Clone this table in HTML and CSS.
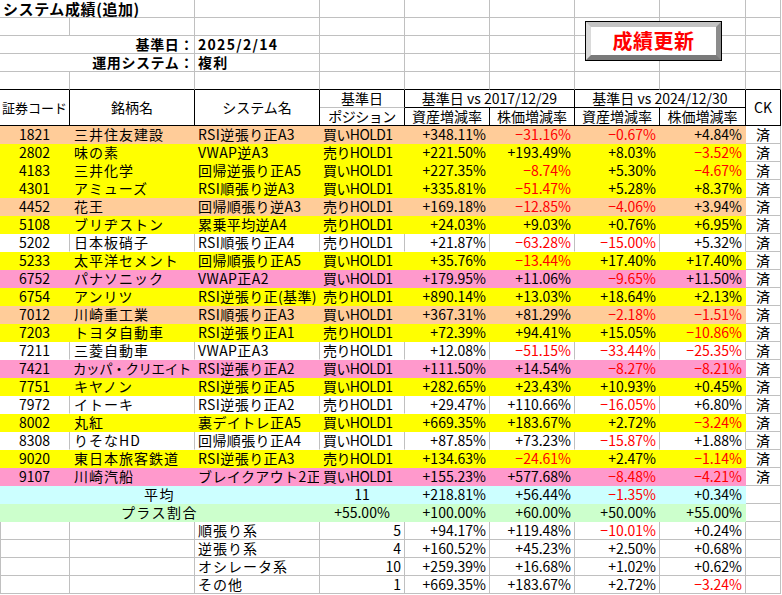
FILE: index.html
```html
<!DOCTYPE html>
<html lang="ja">
<head>
<meta charset="utf-8">
<title>システム成績(追加)</title>
<link rel="stylesheet" href="styles.css">
</head>
<body>
<div class="sheet">
<table class="grid">
<colgroup>
<col class="ca"><col class="cb"><col class="cc"><col class="cd"><col class="ce"><col class="cf"><col class="cg"><col class="ch"><col class="ci">
</colgroup>
<tbody>
<tr><td colspan="2" class="title">システム成績(追加)</td><td></td><td></td><td></td><td></td><td></td><td></td><td></td></tr>
<tr><td></td><td></td><td></td><td></td><td></td><td></td><td></td><td></td><td></td></tr>
<tr><td colspan="2" class="lbl">基準日：</td><td class="val">2025/2/14</td><td></td><td></td><td></td><td></td><td></td><td></td></tr>
<tr><td colspan="2" class="lbl">運用システム：</td><td class="val">複利</td><td></td><td></td><td></td><td></td><td></td><td></td></tr>
<tr class="pre"><td></td><td></td><td></td><td></td><td></td><td></td><td></td><td></td><td></td></tr>
<tr class="hd">
<td rowspan="2" class="h code-h">証券コード</td>
<td rowspan="2" class="h c">銘柄名</td>
<td rowspan="2" class="h c">システム名</td>
<td class="h c sub">基準日</td>
<td colspan="2" class="h c">基準日 vs 2017/12/29</td>
<td colspan="2" class="h c">基準日 vs 2024/12/30</td>
<td rowspan="2" class="h c">CK</td>
</tr>
<tr class="hd">
<td class="h c pos">ポジション</td>
<td class="h c">資産増減率</td>
<td class="h c">株価増減率</td>
<td class="h c">資産増減率</td>
<td class="h c">株価増減率</td>
</tr>
<tr class="o d"><td class="c">1821</td><td>三井住友建設</td><td>RSI逆張り正A3</td><td>買いHOLD1</td><td class="r">+348.11%</td><td class="r n">−31.16%</td><td class="r n">−0.67%</td><td class="r">+4.84%</td><td class="ck">済</td></tr>
<tr class="y d"><td class="c">2802</td><td>味の素</td><td>VWAP逆A3</td><td>売りHOLD1</td><td class="r">+221.50%</td><td class="r">+193.49%</td><td class="r">+8.03%</td><td class="r n">−3.52%</td><td class="ck">済</td></tr>
<tr class="y d"><td class="c">4183</td><td>三井化学</td><td>回帰逆張り正A5</td><td>買いHOLD1</td><td class="r">+227.35%</td><td class="r n">−8.74%</td><td class="r">+5.30%</td><td class="r n">−4.67%</td><td class="ck">済</td></tr>
<tr class="y d"><td class="c">4301</td><td>アミューズ</td><td>RSI順張り逆A3</td><td>買いHOLD1</td><td class="r">+335.81%</td><td class="r n">−51.47%</td><td class="r">+5.28%</td><td class="r">+8.37%</td><td class="ck">済</td></tr>
<tr class="o d"><td class="c">4452</td><td>花王</td><td>回帰順張り逆A3</td><td>売りHOLD1</td><td class="r">+169.18%</td><td class="r n">−12.85%</td><td class="r n">−4.06%</td><td class="r">+3.94%</td><td class="ck">済</td></tr>
<tr class="y d"><td class="c">5108</td><td>ブリヂストン</td><td>累乗平均逆A4</td><td>売りHOLD1</td><td class="r">+24.03%</td><td class="r">+9.03%</td><td class="r">+0.76%</td><td class="r">+6.95%</td><td class="ck">済</td></tr>
<tr class="w d"><td class="c">5202</td><td>日本板硝子</td><td>RSI順張り正A4</td><td>売りHOLD1</td><td class="r">+21.87%</td><td class="r n">−63.28%</td><td class="r n">−15.00%</td><td class="r">+5.32%</td><td class="ck">済</td></tr>
<tr class="y d"><td class="c">5233</td><td>太平洋セメント</td><td>回帰順張り正A5</td><td>買いHOLD1</td><td class="r">+35.76%</td><td class="r n">−13.44%</td><td class="r">+17.40%</td><td class="r">+17.40%</td><td class="ck">済</td></tr>
<tr class="p d"><td class="c">6752</td><td>パナソニック</td><td>VWAP正A2</td><td>買いHOLD1</td><td class="r">+179.95%</td><td class="r">+11.06%</td><td class="r n">−9.65%</td><td class="r">+11.50%</td><td class="ck">済</td></tr>
<tr class="y d"><td class="c">6754</td><td>アンリツ</td><td>RSI逆張り正(基準)</td><td>売りHOLD1</td><td class="r">+890.14%</td><td class="r">+13.03%</td><td class="r">+18.64%</td><td class="r">+2.13%</td><td class="ck">済</td></tr>
<tr class="o d"><td class="c">7012</td><td>川崎重工業</td><td>RSI順張り正A3</td><td>買いHOLD1</td><td class="r">+367.31%</td><td class="r">+81.29%</td><td class="r n">−2.18%</td><td class="r n">−1.51%</td><td class="ck">済</td></tr>
<tr class="y d"><td class="c">7203</td><td>トヨタ自動車</td><td>RSI逆張り正A1</td><td>売りHOLD1</td><td class="r">+72.39%</td><td class="r">+94.41%</td><td class="r">+15.05%</td><td class="r n">−10.86%</td><td class="ck">済</td></tr>
<tr class="w d"><td class="c">7211</td><td>三菱自動車</td><td>VWAP正A3</td><td>売りHOLD1</td><td class="r">+12.08%</td><td class="r n">−51.15%</td><td class="r n">−33.44%</td><td class="r n">−25.35%</td><td class="ck">済</td></tr>
<tr class="p d"><td class="c">7421</td><td class="tight">カッパ・クリエイト</td><td>RSI逆張り正A2</td><td>買いHOLD1</td><td class="r">+111.50%</td><td class="r">+14.54%</td><td class="r n">−8.27%</td><td class="r n">−8.21%</td><td class="ck">済</td></tr>
<tr class="y d"><td class="c">7751</td><td>キヤノン</td><td>RSI逆張り正A5</td><td>買いHOLD1</td><td class="r">+282.65%</td><td class="r">+23.43%</td><td class="r">+10.93%</td><td class="r">+0.45%</td><td class="ck">済</td></tr>
<tr class="w d"><td class="c">7972</td><td>イトーキ</td><td>RSI逆張り正A2</td><td>売りHOLD1</td><td class="r">+29.47%</td><td class="r">+110.66%</td><td class="r n">−16.05%</td><td class="r">+6.80%</td><td class="ck">済</td></tr>
<tr class="y d"><td class="c">8002</td><td>丸紅</td><td>裏デイトレ正A5</td><td>買いHOLD1</td><td class="r">+669.35%</td><td class="r">+183.67%</td><td class="r">+2.72%</td><td class="r n">−3.24%</td><td class="ck">済</td></tr>
<tr class="w d"><td class="c">8308</td><td>りそなHD</td><td>回帰順張り正A4</td><td>買いHOLD1</td><td class="r">+87.85%</td><td class="r">+73.23%</td><td class="r n">−15.87%</td><td class="r">+1.88%</td><td class="ck">済</td></tr>
<tr class="y d"><td class="c">9020</td><td>東日本旅客鉄道</td><td>RSI逆張り正A3</td><td>売りHOLD1</td><td class="r">+134.63%</td><td class="r n">−24.61%</td><td class="r">+2.47%</td><td class="r n">−1.14%</td><td class="ck">済</td></tr>
<tr class="p d"><td class="c">9107</td><td>川崎汽船</td><td class="clip">ブレイクアウト2正A3</td><td>買いHOLD1</td><td class="r">+155.23%</td><td class="r">+577.68%</td><td class="r n">−8.48%</td><td class="r n">−4.21%</td><td class="ck">済</td></tr>
<tr class="avg"><td colspan="3" class="c sum">平均</td><td class="c">11</td><td class="r">+218.81%</td><td class="r">+56.44%</td><td class="r n">−1.35%</td><td class="r">+0.34%</td><td class="ck"></td></tr>
<tr class="plus"><td colspan="3" class="c sum">プラス割合</td><td class="c">+55.00%</td><td class="r">+100.00%</td><td class="r">+60.00%</td><td class="r">+50.00%</td><td class="r">+55.00%</td><td class="ck"></td></tr>
<tr class="btm"><td></td><td></td><td class="cat">順張り系</td><td class="r">5</td><td class="r">+94.17%</td><td class="r">+119.48%</td><td class="r n">−10.01%</td><td class="r">+0.24%</td><td></td></tr>
<tr class="btm"><td></td><td></td><td class="cat">逆張り系</td><td class="r">4</td><td class="r">+160.52%</td><td class="r">+45.23%</td><td class="r">+2.50%</td><td class="r">+0.68%</td><td></td></tr>
<tr class="btm"><td></td><td></td><td class="cat">オシレータ系</td><td class="r">10</td><td class="r">+259.39%</td><td class="r">+16.68%</td><td class="r">+1.02%</td><td class="r">+0.62%</td><td></td></tr>
<tr class="btm"><td></td><td></td><td class="cat">その他</td><td class="r">1</td><td class="r">+669.35%</td><td class="r">+183.67%</td><td class="r">+2.72%</td><td class="r n">−3.24%</td><td></td></tr>
</tbody>
</table>
<div class="btn">成績更新</div>
</div>
</body>
</html>
```
FILE: styles.css
```css
html, body {
  margin: 0;
  padding: 0;
  background: #ffffff;
}
.sheet {
  position: relative;
  width: 782px;
  height: 595px;
  overflow: hidden;
  font-family: "Noto Sans CJK JP", "Noto Sans", sans-serif;
  font-size: 14px;
  color: #000;
}
.grid {
  table-layout: fixed;
  border-collapse: separate;
  border-spacing: 0;
  width: 780px;
}
.ca { width: 70px; }
.cb { width: 125px; }
.cc { width: 125px; }
.cd { width: 85px; }
.ce { width: 85px; }
.cf { width: 85px; }
.cg { width: 85px; }
.ch { width: 86px; }
.ci { width: 35px; }
.grid tr { height: 18px; }
.grid td {
  padding: 0 3px;
  border-right: 1px solid #c0c0c0;
  border-bottom: 1px solid #c0c0c0;
  line-height: 17px;
  white-space: nowrap;
  vertical-align: middle;
  background: #ffffff;
}
.grid td.clip { overflow: hidden; text-overflow: clip; }
.c { text-align: center; }
.r { text-align: right; }
.n { color: #ff0000; }
.title { font-weight: bold; font-size: 15px; letter-spacing: 0.6px; padding-left: 3px; }
.lbl { font-weight: bold; text-align: right; letter-spacing: 0.6px; padding-right: 0 !important; }
.val { font-weight: bold; letter-spacing: 1.3px; }
.grid tr.pre td { border-bottom-color: #000; }
.grid td.h { border-right-color: #000; border-bottom-color: #000; }
.grid td.h.sub { border-bottom-color: #c0c0c0; }
.grid td.code-h { font-size: 13px; padding: 0 1px 0 2px; text-align: left; }
.grid td.pos { letter-spacing: -0.5px; }
.grid tr.d td:nth-child(2) { letter-spacing: 1px; padding-left: 4px; }
.grid tr.d td.tight { font-size: 13.5px; letter-spacing: -0.4px; padding: 0 0 0 3px; }
.grid tr.d td:nth-child(3) { letter-spacing: 0.4px; }
.grid tr.d td:nth-child(4) { letter-spacing: -0.6px; }
.grid td.sum { letter-spacing: 1.5px; }
.grid td.cat { letter-spacing: 1px; }
.grid tr.o td { background: #ffcc99; border-color: #ffcc99; }
.grid tr.y td { background: #ffff00; border-color: #ffff00; }
.grid tr.p td { background: #ff99cc; border-color: #ff99cc; }
.grid tr.w td { border-bottom-color: #ffffff; }
.grid tr.avg td { background: #ccffff; border-color: #ccffff; }
.grid tr.plus td { background: #ccffcc; border-color: #ccffcc; }
.grid tr td.ck {
  background: #ffffff;
  border-right-color: #c0c0c0;
  border-bottom-color: #c0c0c0;
  text-align: center;
  padding: 0;
  letter-spacing: 0;
}
.grid tr.btm td:first-child { border-left: 1px solid #c0c0c0; }
.btn {
  position: absolute;
  left: 586px;
  top: 22px;
  width: 125px;
  height: 28px;
  border-style: solid;
  border-width: 5px;
  border-color: #c4c4c4 #8c8c8c #7a7a7a #dadada;
  box-shadow: 0 0 0 1px #000;
  background: #ffffff;
  color: #ff0000;
  font-family: "Noto Sans CJK JP", sans-serif;
  font-weight: bold;
  font-size: 20px;
  line-height: 28px;
  text-align: center;
  letter-spacing: 0.5px;
}
```
